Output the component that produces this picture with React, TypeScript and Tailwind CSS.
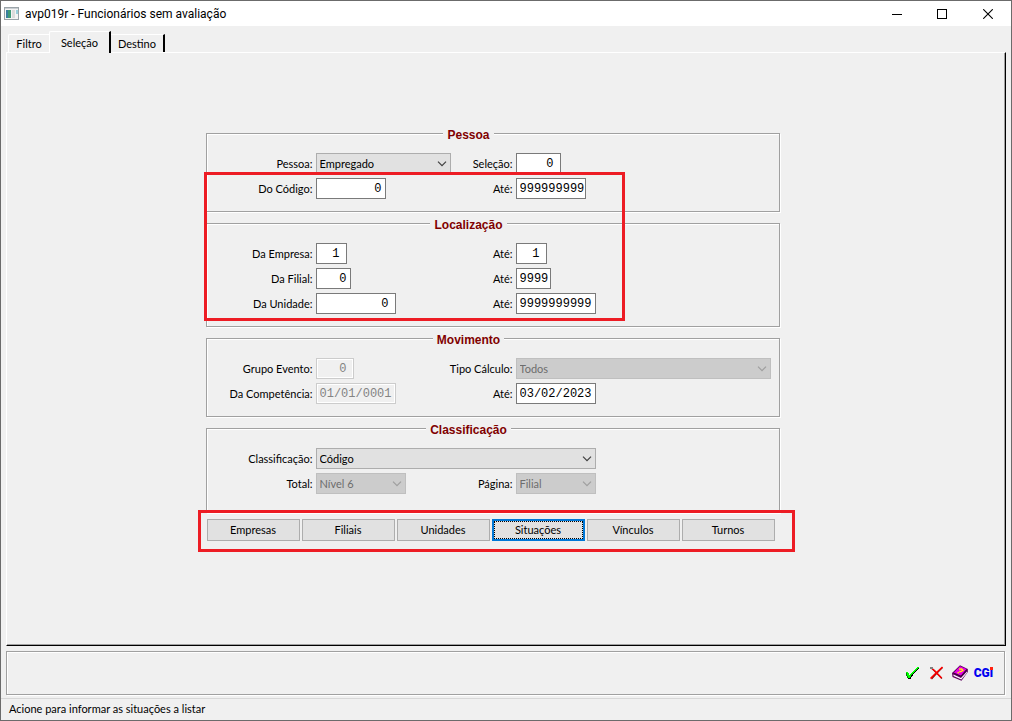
import type { ReactNode } from "react";

const ETCHED =
  "border border-[#a0a0a0] shadow-[1px_1px_0_#fff,inset_1px_1px_0_#fff]";

function Group({ title, tall, children }: { title: string; tall?: boolean; children: ReactNode }) {
  return (
    <fieldset className={`${ETCHED} min-w-0 pt-[13px] pr-12 pl-0 ${tall ? "pb-[18px]" : "pb-3"}`}>
      <legend className="mx-auto h-3.5 bg-[#f0f0f0] px-1 font-['Liberation_Sans',sans-serif] text-[12px] leading-[18px] font-bold text-[#800000]">
        {title}
      </legend>
      <div className="-mr-12 grid grid-cols-[106px_135px_59px_minmax(0,1fr)] items-center gap-x-[3px] gap-y-1">
        {children}
      </div>
    </fieldset>
  );
}

function Label({ id, children }: { id: string; children: ReactNode }) {
  return (
    <label htmlFor={id} className="justify-self-end whitespace-nowrap">
      {children}
    </label>
  );
}

type FieldProps = {
  id: string;
  label: string;
  value: string;
  size: string;
  disabled?: boolean;
};

function TextField({ id, label, value, size, disabled }: FieldProps) {
  return (
    <>
      <Label id={id}>{label}</Label>
      <input
        id={id}
        type="text"
        defaultValue={value}
        disabled={disabled}
        className={`${size} h-[21px] border border-[#7a7a7a] bg-white font-['Liberation_Mono',monospace] text-[12px] leading-[19px] text-black outline-none disabled:border-[#cccccc] disabled:bg-[#f0f0f0] disabled:text-[#838383] disabled:shadow-[inset_0_0_0_1px_#fff]`}
      />
    </>
  );
}

function SelectField({ id, label, value, size, disabled }: FieldProps) {
  return (
    <>
      <Label id={id}>{label}</Label>
      <div className={`relative ${size}`}>
        <select
          id={id}
          defaultValue={value}
          disabled={disabled}
          className="block h-[21px] w-full appearance-none border border-[#adadad] bg-[#e1e1e1] pl-[3px] text-black opacity-100 outline-none disabled:border-[#bfbfbf] disabled:bg-[#cccccc] disabled:text-[#6d6d6d]"
        >
          <option>{value}</option>
        </select>
        <svg
          viewBox="0 0 10 6"
          className={`pointer-events-none absolute top-2 right-1 h-1.5 w-2.5 ${disabled ? "text-[#9f9f9f]" : "text-[#404040]"}`}
          fill="none"
          stroke="currentColor"
          strokeWidth="1.2"
          aria-hidden="true"
        >
          <path d="M1 .7 5 4.7 9 .7" />
        </svg>
      </div>
    </>
  );
}

const actions = ["Empresas", "Filiais", "Unidades", "Situações", "Vínculos", "Turnos"];

function TitleBar() {
  return (
    <header className="flex h-[25px] items-center bg-white">
      <svg viewBox="0 0 15 13" className="ml-[3px] h-[13px] w-[15px]" shapeRendering="crispEdges" aria-hidden="true">
        <rect x=".5" y=".5" width="14" height="12" fill="#f4f4f4" stroke="#9aa3a8" />
        <rect x="1" y="1" width="13" height="1" fill="#c9ced2" />
        <rect x="2" y="3" width="5" height="8" fill="#3f9a78" />
        <rect x="2" y="3" width="2" height="8" fill="#3a7fa0" />
        <rect x="8" y="3" width="3" height="8" fill="#dcdcdc" />
        <rect x="12" y="3" width="2" height="4" fill="#9ad0dc" />
      </svg>
      <h1 className="ml-1.5 font-['Roboto',sans-serif] text-[12px] leading-4 whitespace-nowrap text-black">
        avp019r - Funcionários sem avaliação
      </h1>
      <div className="ml-auto flex h-full">
        <button type="button" aria-label="Minimizar" className="grid w-11 place-items-center">
          <svg viewBox="0 0 10 10" className="size-2.5" shapeRendering="crispEdges">
            <path d="M0 5.5h10" stroke="#000" />
          </svg>
        </button>
        <button type="button" aria-label="Maximizar" className="grid w-[46px] place-items-center">
          <svg viewBox="0 0 10 10" className="size-2.5" shapeRendering="crispEdges">
            <path d="M.5 .5h9v9h-9z" fill="none" stroke="#000" />
          </svg>
        </button>
        <button type="button" aria-label="Fechar" className="grid w-[46px] place-items-center">
          <svg viewBox="0 0 10 10" className="size-2.5">
            <path d="M.2 .2l9.6 9.6M9.8 .2.2 9.8" stroke="#000" strokeWidth="1.1" />
          </svg>
        </button>
      </div>
    </header>
  );
}

function Toolbar() {
  return (
    <div role="toolbar" aria-label="Ações" className={`${ETCHED} mt-[5px] mr-1.5 ml-[5px] flex h-11 items-center justify-end gap-2 pr-[11px]`}>
      <button type="button" aria-label="Confirmar">
        <svg viewBox="0 0 16 16" className="size-4" shapeRendering="crispEdges">
          <path d="M2 8h3v3h1v-1h1V9h1V8h1V7h1V6h1V5h1V4h1V3h2v1h-1v1h-1v1h-1v1h-1v1h-1v1h-1v1H9v1H8v1H7v2H4v-1H3v-3H2z" fill="#000" />
          <path d="M2 7h2v1h1v2h1V9h1V8h1V7h1V6h1V5h1V4h1V3h1V2h2v1h-1v1h-1v1h-1v1h-1v1h-1v1H9v1H8v1H7v2H6v1H4v-2H3V9H2z" fill="#0f0" />
          <path d="M2 8h1v3h1v2H3v-2H2z" fill="#008000" />
        </svg>
      </button>
      <button type="button" aria-label="Cancelar">
        <svg viewBox="0 0 16 16" className="size-4">
          <path d="M3.500 3l10.500 10.500M14.500 2.500 8.500 8.500 3.500 14" fill="none" stroke="#800000" strokeWidth="1.200" />
          <path d="M2.500 2.500l4 3 7 7.500M14.500 2 8 8 2.500 13.500" fill="none" stroke="#f00" strokeWidth="1.500" />
          <path d="M2 2h3v2H2z" fill="#808080" />
        </svg>
      </button>
      <button type="button" aria-label="Ajuda">
        <svg viewBox="0 0 16 16" className="size-4">
          <path d="M0 8 8 .2 15.800 4v3L9.500 15.800.5 12z" fill="#600060" />
          <path d="M1.500 9.500 9 13l6-6.500v1.200l-5.700 6.800-7.800-3.500z" fill="#fff" />
          <path d="M1.500 8 8 1.200l7 3L9 11z" fill="#e800e8" />
          <path d="M1.500 8 9 11.300l6-6.800" fill="none" stroke="#400040" strokeWidth="1.200" />
          <path d="M7 4.200 9.700 4l1.200 1.300-2 1.400-1.700-.2M5.500 7.300l1.500.7" fill="none" stroke="#ff0" strokeWidth="1.300" />
        </svg>
      </button>
      <button
        type="button"
        className="relative -ml-0.5 font-['Roboto',sans-serif] text-[12px] leading-4 font-black text-[#0000f0]"
      >
        CGi
        <span className="absolute top-0.5 right-0 size-[3px] bg-[#ff2010]" aria-hidden="true" />
      </button>
    </div>
  );
}

export default function App() {
  return (
    <div className="flex min-h-screen flex-col border border-[#6b6b6b] bg-[#f0f0f0] font-['Lato',sans-serif] text-[11px] leading-4 text-black">
      <TitleBar />

      <div role="tablist" className="mt-[5px] flex h-[21px] items-end pl-[7px]">
        <button type="button" role="tab" aria-selected="false" className="h-[18px] w-[41px] rounded-tl-[2px] border-t border-l border-white">
          Filtro
        </button>
        <button
          type="button"
          role="tab"
          aria-selected="true"
          className="relative z-10 -mb-px h-[22px] w-[62px] rounded-tl-[2px] border-t border-r-2 border-l border-t-white border-r-black border-l-white bg-[#f0f0f0]"
        >
          Seleção
        </button>
        <button type="button" role="tab" aria-selected="false" className="h-[18px] w-[54px] border-t border-r-2 border-t-white border-r-black">
          Destino
        </button>
      </div>

      <main className="mx-[5px] flex flex-1 justify-center border border-t-white border-r-black border-b-black border-l-white pt-[73px] pr-[27px] pb-4 shadow-[inset_-1px_-1px_0_#a0a0a0]">
        <form className="w-[574px]" onSubmit={(e) => e.preventDefault()}>
          <div className="relative flex flex-col gap-1">
            <Group title="Pessoa">
              <SelectField id="pessoa" label="Pessoa:" value="Empregado" size="w-[135px]" />
              <TextField id="selecao" label="Seleção:" value="0" size="w-[45px] pr-1.5 text-right" />
              <TextField id="codigo-de" label="Do Código:" value="0" size="w-[70px] pr-[3px] text-right" />
              <TextField id="codigo-ate" label="Até:" value="999999999" size="w-[70px] pl-[3px]" />
            </Group>
            <Group title="Localização">
              <TextField id="empresa-de" label="Da Empresa:" value="1" size="w-[31px] pr-1.5 text-right" />
              <TextField id="empresa-ate" label="Até:" value="1" size="w-[31px] pr-1.5 text-right" />
              <TextField id="filial-de" label="Da Filial:" value="0" size="w-[35px] pr-[3px] text-right" />
              <TextField id="filial-ate" label="Até:" value="9999" size="w-[35px] pl-[3px]" />
              <TextField id="unidade-de" label="Da Unidade:" value="0" size="w-20 pr-1.5 text-right" />
              <TextField id="unidade-ate" label="Até:" value="9999999999" size="w-20 pl-[3px]" />
            </Group>
            <Group title="Movimento">
              <TextField id="evento" label="Grupo Evento:" value="0" size="w-[38px] pr-1.5 text-right" disabled />
              <SelectField id="calculo" label="Tipo Cálculo:" value="Todos" size="w-[255px]" disabled />
              <TextField id="competencia-de" label="Da Competência:" value="01/01/0001" size="w-20 pl-[3px]" disabled />
              <TextField id="competencia-ate" label="Até:" value="03/02/2023" size="w-20 pl-[3px]" />
            </Group>
            <Group title="Classificação" tall>
              <SelectField id="classificacao" label="Classificação:" value="Código" size="col-span-3 w-[280px]" />
              <SelectField id="total" label="Total:" value="Nível 6" size="w-[90px]" disabled />
              <SelectField id="pagina" label="Página:" value="Filial" size="w-20" disabled />
            </Group>
            <div className="pointer-events-none absolute top-[46px] -left-0.5 h-[149px] w-[421px] border-3 border-[#ed1c24]" aria-hidden="true" />
          </div>

          <div className="relative mt-1.5 flex gap-0.5 pl-px">
            {actions.map((name) => (
              <button
                key={name}
                type="button"
                className={
                  name === "Situações"
                    ? "h-[22px] w-[93px] border-2 border-[#0078d7] bg-[#e1e1e1] outline-1 -outline-offset-3 outline-black outline-dotted"
                    : "h-[22px] w-[93px] border border-[#adadad] bg-[#e1e1e1]"
                }
              >
                {name}
              </button>
            ))}
            <div className="pointer-events-none absolute -top-[9px] -left-2 h-[42px] w-[597px] border-3 border-[#ed1c24]" aria-hidden="true" />
          </div>
        </form>
      </main>

      <Toolbar />

      <footer role="status" className="mt-[3px] h-[22px] border-t border-[#d7d7d7] pt-0.5 pl-2">
        Acione para informar as situações a listar
      </footer>
    </div>
  );
}
